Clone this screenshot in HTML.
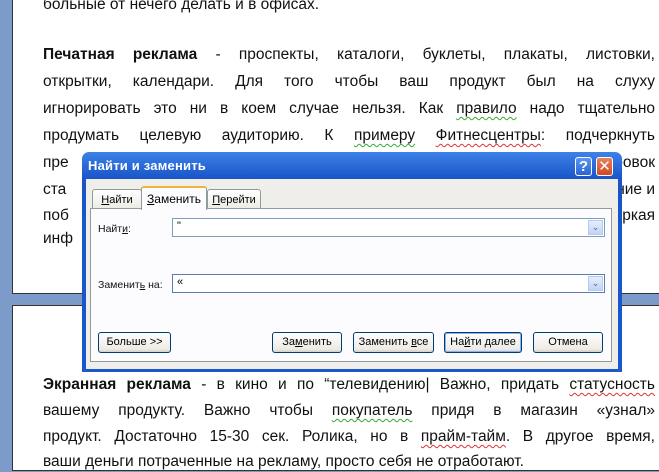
<!DOCTYPE html>
<html><head><meta charset="utf-8"><style>
*{margin:0;padding:0;box-sizing:border-box}
body{width:659px;height:471px;overflow:hidden;background:#7d9bc8;position:relative;font-family:"Liberation Sans","DejaVu Sans",sans-serif}
.page{position:absolute;left:12px;background:#fff;border:1px solid #333}
.t{position:absolute;left:43px;width:612px;font-size:15.5px;color:#111;white-space:nowrap;text-align:justify;text-align-last:justify;line-height:20px}
.t.l{text-align-last:left}
.t.rr{text-align:right;text-align-last:right}
b{font-weight:bold}
.w{text-decoration:underline wavy #3a3;text-decoration-thickness:1px;text-underline-offset:3px}
.r{text-decoration:underline wavy #d33;text-decoration-thickness:1px;text-underline-offset:3px}
.dlg{position:absolute;left:82px;top:152px;width:540px;height:220px;border-radius:7px 7px 0 0;background:linear-gradient(#3e82e8,#1955c9 12%,#1a57cc)}
.title{position:absolute;left:6px;top:6px;color:#fff;font-weight:bold;font-size:13px;letter-spacing:.2px}
.body{position:absolute;left:4px;top:27px;right:4px;bottom:3px;background:#efeeea}
.panel{position:absolute;left:4px;top:29px;width:522px;height:154px;background:#fcfcfe;border:1px solid #919b9c}
.tab{position:absolute;top:10px;height:20px;border:1px solid #919b9c;border-bottom:none;background:linear-gradient(#fff,#ecebe5);font-size:11px;padding:4px 0 0;text-align:center;border-radius:3px 3px 0 0}
.tab.a{top:7px;height:24px;background:#fcfcfe;border-top:2px solid #f2b33c;z-index:2;font-size:12px}
.lbl{position:absolute;font-size:10.5px;color:#111}
.inp{position:absolute;height:19px;background:#fff;border:1px solid #7f9db9;font-size:11px;padding:1px 4px}
.dd{position:absolute;right:1px;top:1px;width:15px;height:15px;background:linear-gradient(#e6eefc,#c2d3f6);border:1px solid #b7c9ef;color:#4d6185;font-size:9px;text-align:center;line-height:13px}
.btn{position:absolute;top:153px;height:21px;border:1px solid #003c74;border-radius:3px;background:linear-gradient(#fff,#ecebe6 85%,#d6d0c5);font-size:11px;text-align:center;line-height:19px;z-index:3}
.tb{position:absolute;top:5px;width:17px;height:19px;border:1px solid #fff;border-radius:3px;color:#fff;font-weight:bold;text-align:center;font-size:15px;line-height:17px}
</style></head><body>
<div class="page" style="top:-2px;width:650px;height:296px"></div>
<div class="page" style="top:305px;width:650px;height:166px"></div>

<div class="t l" style="top:-5px">больные от нечего делать и в офисах.</div>
<div class="t" style="top:45px"><b>Печатная реклама</b> - проспекты, каталоги, буклеты, плакаты, листовки,</div>
<div class="t" style="top:72px">открытки, календари. Для того чтобы ваш продукт был на слуху</div>
<div class="t" style="top:99px">игнорировать это ни в коем случае нельзя. Как <span class="w">правило</span> надо тщательно</div>
<div class="t" style="top:126px">продумать целевую аудиторию. К <span class="w">примеру</span> <span class="r">Фитнесцентры</span>: подчеркнуть</div>
<div class="t l" style="top:153px">пре</div><div class="t rr" style="top:153px">ровок</div>
<div class="t l" style="top:180px">ста</div><div class="t rr" style="top:180px">ние и</div>
<div class="t l" style="top:206px">поб</div><div class="t rr" style="top:206px">ркая</div>
<div class="t l" style="top:229px">инф</div>

<div class="t" style="top:375px"><b>Экранная реклама</b> - в кино и по “телевидению| Важно, придать <span class="r">статусность</span></div>
<div class="t" style="top:401px">вашему продукту. Важно чтобы <span class="w">покупатель</span> придя в магазин «узнал»</div>
<div class="t" style="top:427px">продукт. Достаточно 15-30 сек. Ролика, но в <span class="r">прайм-тайм</span>. В другое время,</div>
<div class="t l" style="top:452px">ваши деньги потраченные на рекламу, просто себя не отработают.</div>

<div class="dlg">
 <div class="title">Найти и заменить</div>
 <div class="tb" style="left:493px;background:linear-gradient(#5b96f0,#2a64d6)">?</div>
 <div class="tb" style="left:514px;background:linear-gradient(#e8825e,#cf4a22)">✕</div>
 <div class="body">
  <div class="tab" style="left:6px;width:50px"><u>Н</u>айти</div>
  <div class="tab a" style="left:55px;width:66px"><u>З</u>аменить</div>
  <div class="tab" style="left:121px;width:54px"><u>П</u>ерейти</div>
  <div class="panel">
   <div class="lbl" style="left:7px;top:14px">Найт<u>и</u>:</div>
   <div class="inp" style="left:81px;top:9px;width:433px">"<div class="dd">⌄</div></div>
   <div class="lbl" style="left:7px;top:70px">Заменит<u>ь</u> на:</div>
   <div class="inp" style="left:81px;top:65px;width:433px;border-color:#5a7bb8">«<div class="dd">⌄</div></div>
  </div>
  <div class="btn" style="left:12px;width:73px">Больше &gt;&gt;</div>
  <div class="btn" style="left:186px;width:70px">За<u>м</u>енить</div>
  <div class="btn" style="left:267px;width:81px">Заменить <u>в</u>се</div>
  <div class="btn" style="left:358px;width:78px;box-shadow:inset 0 0 0 1px #8cb0f0">На<u>й</u>ти далее</div>
  <div class="btn" style="left:447px;width:70px">Отмена</div>
 </div>
</div>
</body></html>
